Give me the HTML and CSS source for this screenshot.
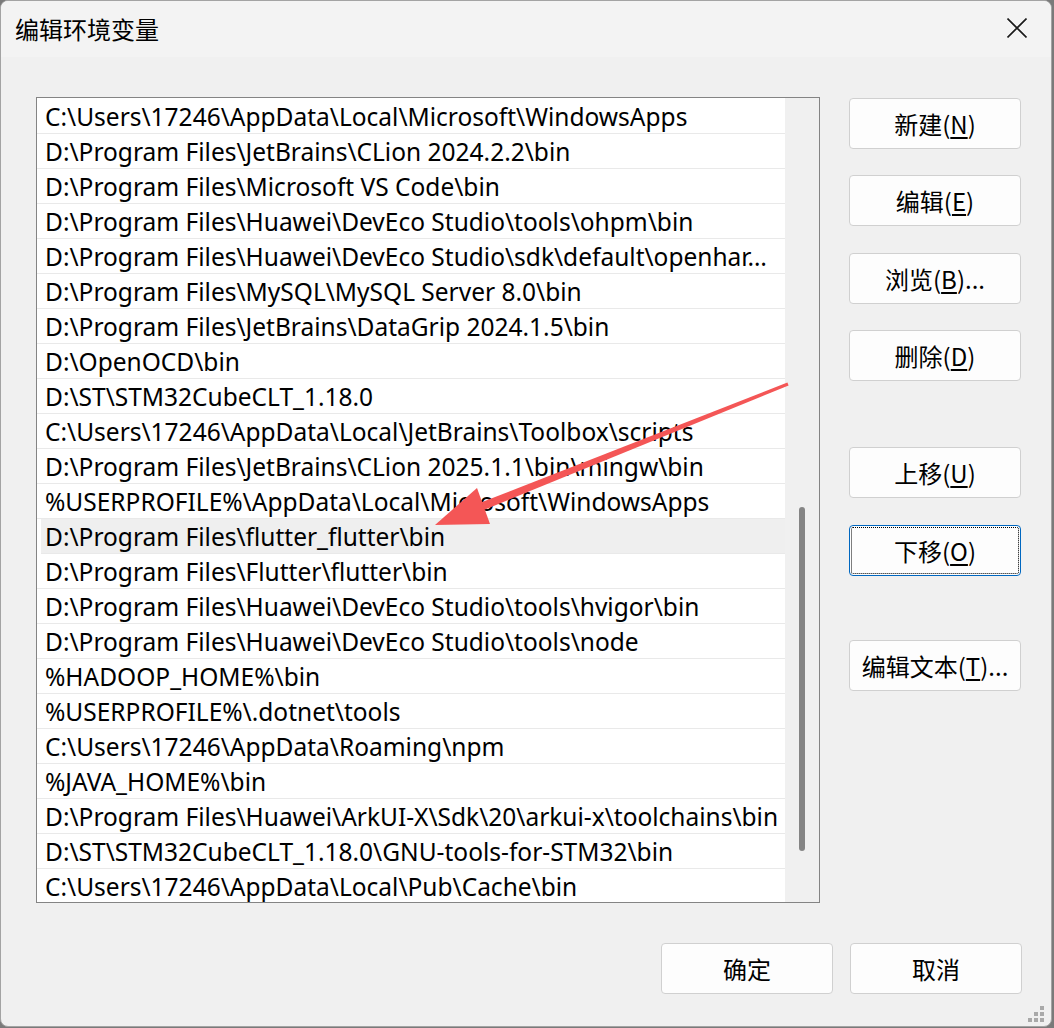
FILE: index.html
```html
<!DOCTYPE html>
<html lang="zh-CN">
<head>
<meta charset="utf-8">
<title>编辑环境变量</title>
<link rel="stylesheet" href="styles.css">
</head>
<body>
<div class="window">
  <div class="titlebar">
    <span class="title">编辑环境变量</span>
    <svg class="close" width="20" height="20" viewBox="0 0 20 20"><path d="M0.5 0.5 L19.5 19.5 M19.5 0.5 L0.5 19.5" stroke="#1a1a1a" stroke-width="1.6" fill="none"/></svg>
  </div>

  <div class="content">
    <div class="listbox">
      <ul class="rows">
        <li>C:\Users\17246\AppData\Local\Microsoft\WindowsApps</li>
        <li>D:\Program Files\JetBrains\CLion 2024.2.2\bin</li>
        <li>D:\Program Files\Microsoft VS Code\bin</li>
        <li>D:\Program Files\Huawei\DevEco Studio\tools\ohpm\bin</li>
        <li>D:\Program Files\Huawei\DevEco Studio\sdk\default\openhar…</li>
        <li>D:\Program Files\MySQL\MySQL Server 8.0\bin</li>
        <li>D:\Program Files\JetBrains\DataGrip 2024.1.5\bin</li>
        <li>D:\OpenOCD\bin</li>
        <li>D:\ST\STM32CubeCLT_1.18.0</li>
        <li>C:\Users\17246\AppData\Local\JetBrains\Toolbox\scripts</li>
        <li>D:\Program Files\JetBrains\CLion 2025.1.1\bin\mingw\bin</li>
        <li>%USERPROFILE%\AppData\Local\Microsoft\WindowsApps</li>
        <li class="selected">D:\Program Files\flutter_flutter\bin</li>
        <li>D:\Program Files\Flutter\flutter\bin</li>
        <li>D:\Program Files\Huawei\DevEco Studio\tools\hvigor\bin</li>
        <li>D:\Program Files\Huawei\DevEco Studio\tools\node</li>
        <li>%HADOOP_HOME%\bin</li>
        <li>%USERPROFILE%\.dotnet\tools</li>
        <li>C:\Users\17246\AppData\Roaming\npm</li>
        <li>%JAVA_HOME%\bin</li>
        <li>D:\Program Files\Huawei\ArkUI-X\Sdk\20\arkui-x\toolchains\bin</li>
        <li>D:\ST\STM32CubeCLT_1.18.0\GNU-tools-for-STM32\bin</li>
        <li>C:\Users\17246\AppData\Local\Pub\Cache\bin</li>
      </ul>
      <div class="scrolltrack"><div class="thumb"></div></div>
    </div>

    <div class="actions">
      <button class="btn">新建(<u>N</u>)</button>
      <button class="btn gap-26">编辑(<u>E</u>)</button>
      <button class="btn gap-27">浏览(<u>B</u>)...</button>
      <button class="btn gap-26">删除(<u>D</u>)</button>
      <button class="btn gap-66">上移(<u>U</u>)</button>
      <button class="btn gap-27 focused">下移(<u>O</u>)</button>
      <button class="btn gap-64">编辑文本(<u>T</u>)...</button>
    </div>
  </div>

  <div class="footer">
    <button class="btn">确定</button>
    <button class="btn">取消</button>
  </div>

  <!-- annotation arrow drawn over the list -->
  <svg class="arrow" width="1052" height="1028" viewBox="0 0 1052 1028">
    <polygon fill="#f45656" points="788.6,385.4 787.4,382.6 481.5,502.3 484.5,509.7"/>
    <polygon fill="#f45656" points="435,525 477,488 490,524"/>
  </svg>

  <svg class="grip" width="18" height="18" viewBox="0 0 18 18">
    <g fill="#a9a9a9">
      <rect x="12" y="0" width="4" height="4"/>
      <rect x="6" y="6" width="4" height="4"/>
      <rect x="12" y="6" width="4" height="4"/>
      <rect x="0" y="12" width="4" height="4"/>
      <rect x="6" y="12" width="4" height="4"/>
      <rect x="12" y="12" width="4" height="4"/>
    </g>
  </svg>
</div>
</body>
</html>
```

FILE: styles.css
```css
* {
  box-sizing: border-box;
}

html, body {
  margin: 0;
  padding: 0;
  background: #7a7a7a;
}

body {
  width: 1054px;
  height: 1028px;
  overflow: hidden;
  font-family: "Noto Sans", "Noto Sans CJK SC", sans-serif;
  color: #000;
}

.window {
  position: relative;
  width: 1052px;
  height: 1027px;
  background: #f0f0f0;
  border: 1px solid #a3a3a3;
  border-radius: 8px;
  overflow: hidden;
}

.titlebar {
  height: 56px;
  background: #f3f3f3;
  display: flex;
  align-items: center;
  justify-content: space-between;
  padding: 0 24px 0 14px;
}

.title {
  font-family: "Noto Sans CJK SC", sans-serif;
  font-size: 24px;
  margin-top: -2px;
}

.close {
  display: block;
  margin-top: -2px;
}

.content {
  display: flex;
  align-items: flex-start;
  gap: 29px;
  padding-left: 35px;
  margin-top: 40px;
}

.listbox {
  width: 784px;
  height: 806px;
  border: 1px solid #848484;
  background: #fff;
  display: flex;
  overflow: hidden;
}

.rows {
  list-style: none;
  margin: 0;
  padding: 1px 0 0 0;
  width: 748px;
  flex: none;
}

.rows li {
  height: 35px;
  line-height: 36px;
  border-bottom: 1px solid #e9e9e9;
  padding-left: 8px;
  font-size: 24.5px;
  white-space: nowrap;
  overflow: hidden;
}

.rows li.selected {
  background: #efefef;
  margin-left: 4px;
  padding-left: 4px;
}

.scrolltrack {
  flex: 1;
  background: #f0f0f0;
  position: relative;
}

.thumb {
  position: absolute;
  left: 14px;
  top: 409px;
  width: 6px;
  height: 344px;
  border-radius: 3px;
  background: #858585;
}

.actions {
  width: 172px;
  display: flex;
  flex-direction: column;
  margin-top: 1px;
}

.btn {
  width: 172px;
  height: 51px;
  background: #fdfdfd;
  border: 1px solid #d0d0d0;
  border-radius: 4px;
  font-family: "Noto Sans CJK SC", sans-serif;
  font-size: 24px;
  color: #000;
  padding: 0;
}

.btn u {
  text-underline-offset: 3px;
}

.gap-26 { margin-top: 26px; }
.gap-27 { margin-top: 27px; }
.gap-64 { margin-top: 64px; }
.gap-66 { margin-top: 66px; }

.btn.focused {
  border: 1px solid #0067c0;
  outline: 1px dotted #000;
  outline-offset: -3px;
}

.footer {
  display: flex;
  justify-content: flex-end;
  gap: 17px;
  padding-right: 29px;
  margin-top: 40px;
}

.arrow {
  position: absolute;
  left: -1px;
  top: -1px;
  pointer-events: none;
}

.grip {
  position: absolute;
  right: 5px;
  bottom: 2px;
}
```
